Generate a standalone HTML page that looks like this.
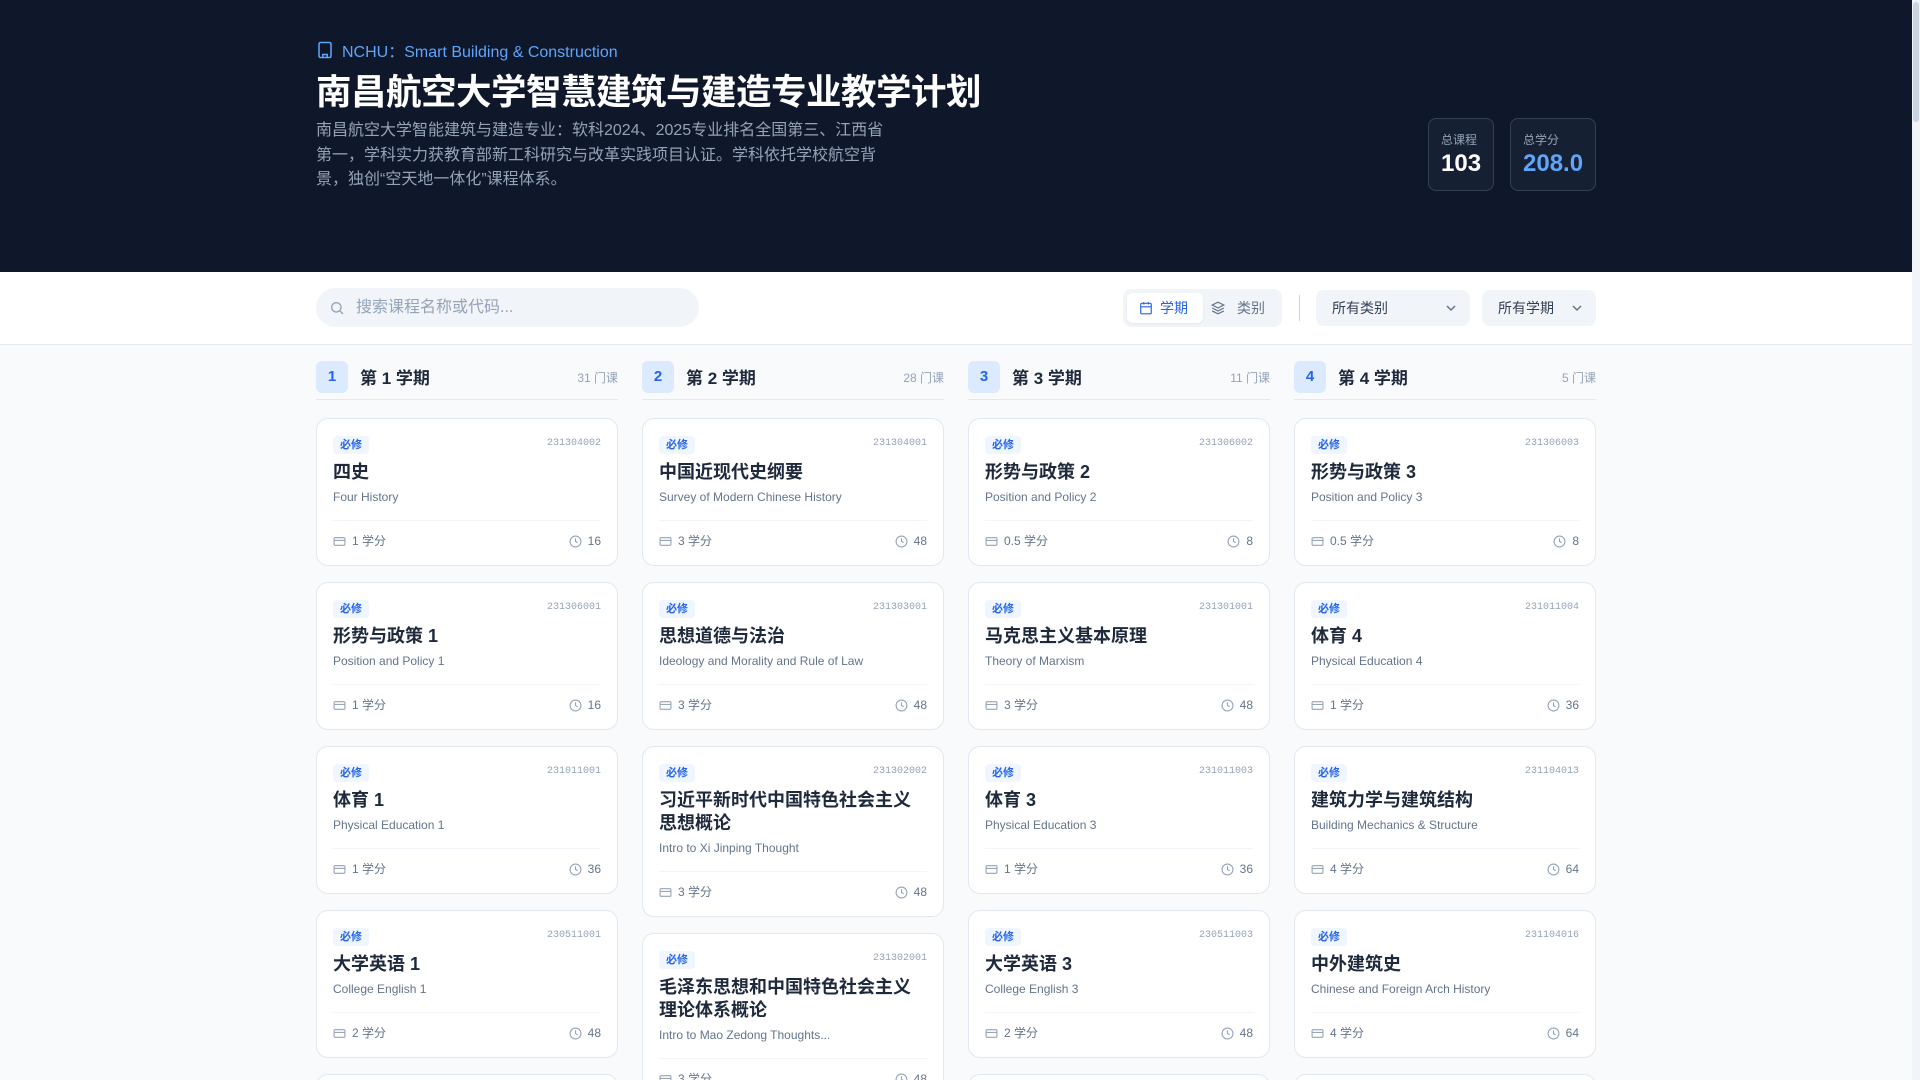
<!DOCTYPE html>
<html><head><meta charset="utf-8"><style>
*{box-sizing:border-box;margin:0;padding:0}
html,body{width:1920px;height:1080px;overflow:hidden}
body{font-family:"Liberation Sans","Noto Sans CJK SC",sans-serif;background:#f8fafc;position:relative}
.page{width:1912px}
.sb{position:absolute;right:0;top:0;width:8px;height:1080px;background:#f1f5f9}
.sb i{position:absolute;left:1px;top:2px;width:6px;height:120px;background:#cbd5e1;border-radius:3px}
.hero{background:#0f172a;height:272px;position:relative}
.wrap{width:1280px;margin-left:316px;position:relative}
.sub{position:absolute;top:38px;left:0;color:#60a5fa;font-size:16px;display:flex;align-items:center;gap:8px}
.h1{position:absolute;top:64px;left:0;color:#fff;font-size:35.5px;font-weight:bold;letter-spacing:-0.5px}
.desc{position:absolute;top:119px;left:0;width:576px;color:#94a3b8;font-size:16px;line-height:24.5px}
.stat{position:absolute;top:118px;height:73px;border:1px solid #334155;background:#162033;border-radius:8px;padding:12px 12px}
.stat .l{font-size:12px;color:#94a3b8}
.stat .n{font-size:24px;font-weight:bold;color:#fff;margin-top:2px}
.bar{background:#fff;height:73px;border-bottom:1px solid #e2e8f0;position:relative}
.search{position:absolute;left:0;top:16px;width:383px;height:39px;background:#f1f5f9;border-radius:20px;color:#94a3b8;font-size:16px;padding-left:40px;line-height:39px}
.search svg{position:absolute;left:13px;top:12px}
.tg{position:absolute;left:807px;top:17px;width:159px;height:38px;background:#f1f5f9;border-radius:8px}
.tg .a{position:absolute;left:4px;top:4px;width:76px;height:30px;background:#fff;border-radius:6px;color:#2563eb;font-size:14px;line-height:30px;padding-left:33px;box-shadow:0 1px 2px rgba(0,0,0,.06)}
.tg .b{position:absolute;left:88px;top:4px;height:30px;color:#64748b;font-size:14px;line-height:30px;padding-left:26px}
.tg svg{position:absolute;top:8px}
.div{position:absolute;left:983px;top:23px;width:1px;height:26px;background:#cbd5e1}
.sel{position:absolute;top:18px;height:36px;background:#f1f5f9;border-radius:8px;color:#334155;font-size:14px;line-height:36px;padding-left:16px}
.sel svg{position:absolute;right:14px;top:14px}
.cols{position:absolute;top:361px;left:316px;display:flex;gap:24px}
.col{width:302px}
.ch{height:39px;border-bottom:1px solid #e2e8f0;position:relative;margin-bottom:18px}
.ch .bd{position:absolute;left:0;top:0;width:32px;height:32px;background:#dbeafe;color:#2563eb;border-radius:6px;font-weight:bold;font-size:15px;text-align:center;line-height:32px}
.ch .t{position:absolute;left:44px;top:3px;font-size:17px;font-weight:bold;color:#1e293b}
.ch .c{position:absolute;right:0;top:8px;font-size:12px;color:#94a3b8}
.card{background:#fff;border:1px solid #e2e8f0;border-radius:12px;padding:16px;margin-bottom:16px;position:relative}
.tag{display:inline-block;height:18px;line-height:18px;padding:0 7px;background:#eff6ff;color:#2563eb;font-size:11px;border-radius:4px;font-weight:bold}
.code{position:absolute;right:16px;top:19px;font-family:"Liberation Mono",monospace;font-size:10px;color:#94a3b8}
.ct{font-size:18px;font-weight:bold;color:#1e293b;line-height:23px;margin-top:7px}
.en{font-size:12px;color:#64748b;line-height:18px;margin-top:4px}
.ft{margin-top:14px;border-top:1px solid #f1f5f9;padding-top:12px;height:29px;display:flex;justify-content:space-between;font-size:12px;color:#64748b;line-height:16px}
.ft span{display:flex;align-items:center;gap:6px}
</style></head><body>
<div class="page">
<div class="hero"><div class="wrap">
<div class="sub"><svg width="18" height="18" viewBox="0 0 24 24" fill="none" stroke="#60a5fa" stroke-width="2"><rect x="4" y="2" width="16" height="20" rx="2"/><path d="M9 22v-4h6v4M8 6h.01M12 6h.01M16 6h.01M8 10h.01M12 10h.01M16 10h.01M8 14h.01M12 14h.01M16 14h.01"/></svg>NCHU：Smart Building &amp; Construction</div>
<div class="h1">南昌航空大学智慧建筑与建造专业教学计划</div>
<div class="desc">南昌航空大学智能建筑与建造专业：软科2024、2025专业排名全国第三、江西省第一，学科实力获教育部新工科研究与改革实践项目认证。学科依托学校航空背景，独创“空天地一体化”课程体系。</div>
<div class="stat" style="left:1112px;width:66px"><div class="l">总课程</div><div class="n">103</div></div>
<div class="stat" style="left:1194px;width:86px"><div class="l">总学分</div><div class="n" style="color:#60a5fa">208.0</div></div>
</div></div>
<div class="bar"><div class="wrap">
<div class="search"><svg width="16" height="16" viewBox="0 0 24 24" fill="none" stroke="#94a3b8" stroke-width="2"><circle cx="11" cy="11" r="7"/><path d="M21 21l-4.5-4.5"/></svg>搜索课程名称或代码...</div>
<div class="tg"><div class="a"><svg style="left:12px" width="14" height="14" viewBox="0 0 24 24" fill="none" stroke="#2563eb" stroke-width="2"><rect x="3" y="4" width="18" height="18" rx="2"/><path d="M16 2v4M8 2v4M3 10h18"/></svg>学期</div>
<div class="b"><svg style="left:0;top:8px" width="14" height="14" viewBox="0 0 24 24" fill="none" stroke="#64748b" stroke-width="2"><path d="M12 2L2 7l10 5 10-5-10-5zM2 12l10 5 10-5M2 17l10 5 10-5"/></svg>类别</div></div>
<div class="div"></div>
<div class="sel" style="left:1000px;width:154px">所有类别<svg width="10" height="8" viewBox="0 0 10 8" fill="none" stroke="#64748b" stroke-width="1.5"><path d="M1 2l4 4 4-4"/></svg></div>
<div class="sel" style="left:1166px;width:114px">所有学期<svg width="10" height="8" viewBox="0 0 10 8" fill="none" stroke="#64748b" stroke-width="1.5"><path d="M1 2l4 4 4-4"/></svg></div>
</div></div>
</div>
<div class="cols" id="cols"></div>
<div class="sb"><i></i></div>
<script>
var data=[["第 1 学期","31 门课",[["四史","Four History","231304002","1","16"],["形势与政策 1","Position and Policy 1","231306001","1","16"],["体育 1","Physical Education 1","231011001","1","36"],["大学英语 1","College English 1","230511001","2","48"],["高等数学 1","Advanced Mathematics 1","231011002","5","80"]]],
["第 2 学期","28 门课",[["中国近现代史纲要","Survey of Modern Chinese History","231304001","3","48"],["思想道德与法治","Ideology and Morality and Rule of Law","231303001","3","48"],["习近平新时代中国特色社会主义思想概论","Intro to Xi Jinping Thought","231302002","3","48"],["毛泽东思想和中国特色社会主义理论体系概论","Intro to Mao Zedong Thoughts...","231302001","3","48"]]],
["第 3 学期","11 门课",[["形势与政策 2","Position and Policy 2","231306002","0.5","8"],["马克思主义基本原理","Theory of Marxism","231301001","3","48"],["体育 3","Physical Education 3","231011003","1","36"],["大学英语 3","College English 3","230511003","2","48"],["工程制图","Engineering Drawing","231104001","3","48"]]],
["第 4 学期","5 门课",[["形势与政策 3","Position and Policy 3","231306003","0.5","8"],["体育 4","Physical Education 4","231011004","1","36"],["建筑力学与建筑结构","Building Mechanics & Structure","231104013","4","64"],["中外建筑史","Chinese and Foreign Arch History","231104016","4","64"],["建筑设计","Architectural Design","231104017","4","64"]]]];
var cr='<svg width="13" height="13" viewBox="0 0 24 24" fill="none" stroke="#94a3b8" stroke-width="2"><rect x="2" y="5" width="20" height="14" rx="2"/><path d="M2 10h20"/></svg>';
var ck='<svg width="13" height="13" viewBox="0 0 24 24" fill="none" stroke="#94a3b8" stroke-width="2"><circle cx="12" cy="12" r="10"/><path d="M12 6v6l4 2"/></svg>';
var h='';data.forEach(function(c,i){h+='<div class="col"><div class="ch"><div class="bd">'+(i+1)+'</div><div class="t">'+c[0]+'</div><div class="c">'+c[1]+'</div></div>';
c[2].forEach(function(k){h+='<div class="card"><span class="tag">必修</span><span class="code">'+k[2]+'</span><div class="ct">'+k[0]+'</div><div class="en">'+k[1].replace('&','&amp;')+'</div><div class="ft"><span>'+cr+k[3]+' 学分</span><span>'+ck+k[4]+'</span></div></div>';});h+='</div>';});
document.getElementById('cols').innerHTML=h;
</script>
</body></html>
